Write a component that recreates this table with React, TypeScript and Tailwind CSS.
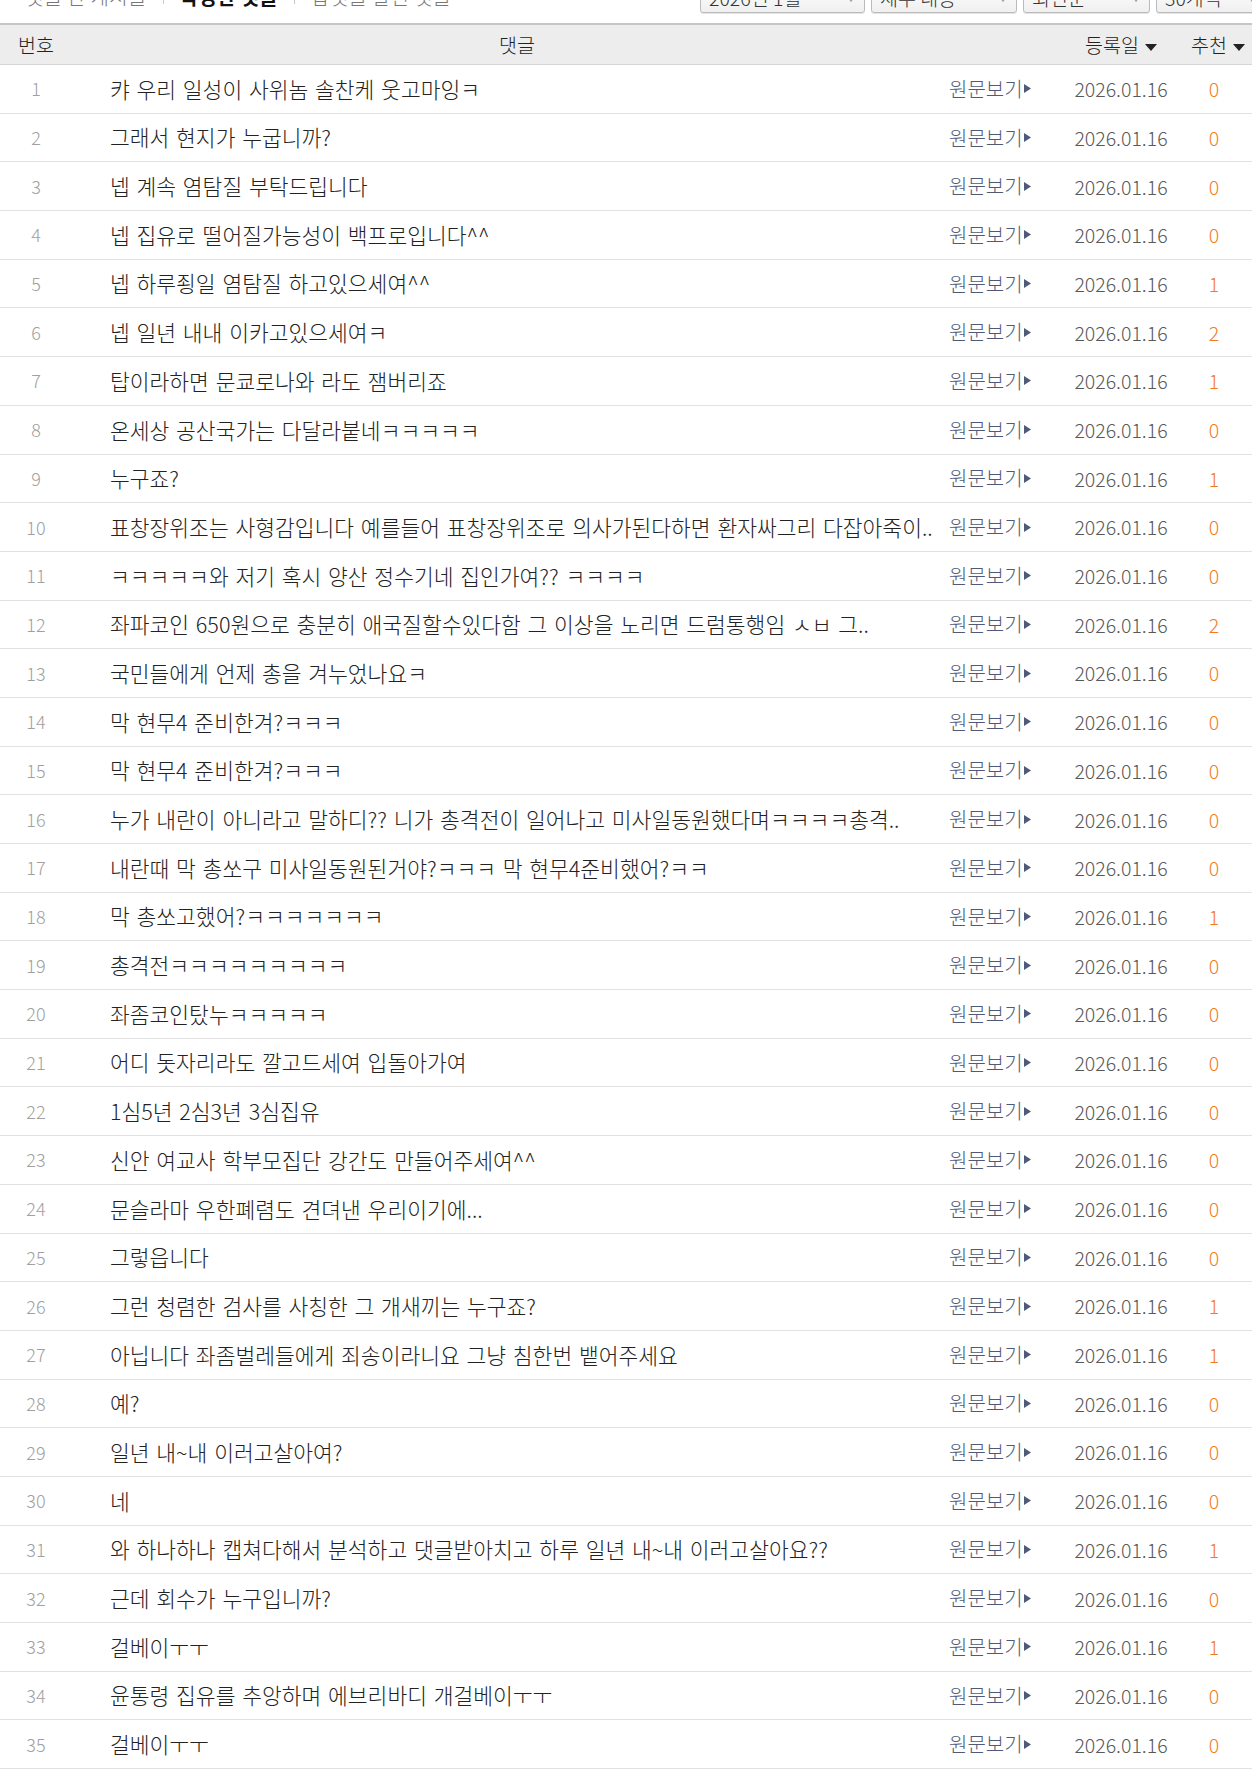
import React from "react";

type Row = { no: number; text: string; rec: number };

const rows: Row[] = [
  { no: 1, text: "캬 우리 일성이 사위놈 솔찬케 웃고마잉ㅋ", rec: 0 },
  { no: 2, text: "그래서 현지가 누굽니까?", rec: 0 },
  { no: 3, text: "넵 계속 염탐질 부탁드립니다", rec: 0 },
  { no: 4, text: "넵 집유로 떨어질가능성이 백프로입니다^^", rec: 0 },
  { no: 5, text: "넵 하루죙일 염탐질 하고있으세여^^", rec: 1 },
  { no: 6, text: "넵 일년 내내 이카고있으세여ㅋ", rec: 2 },
  { no: 7, text: "탑이라하면 문쿄로나와 라도 잼버리죠", rec: 1 },
  { no: 8, text: "온세상 공산국가는 다달라붙네ㅋㅋㅋㅋㅋ", rec: 0 },
  { no: 9, text: "누구죠?", rec: 1 },
  { no: 10, text: "표창장위조는 사형감입니다 예를들어 표창장위조로 의사가된다하면 환자싸그리 다잡아죽이..", rec: 0 },
  { no: 11, text: "ㅋㅋㅋㅋㅋ와 저기 혹시 양산 정수기네 집인가여?? ㅋㅋㅋㅋ", rec: 0 },
  { no: 12, text: "좌파코인 650원으로 충분히 애국질할수있다함 그 이상을 노리면 드럼통행임 ㅅㅂ 그..", rec: 2 },
  { no: 13, text: "국민들에게 언제 총을 겨누었나요ㅋ", rec: 0 },
  { no: 14, text: "막 현무4 준비한겨?ㅋㅋㅋ", rec: 0 },
  { no: 15, text: "막 현무4 준비한겨?ㅋㅋㅋ", rec: 0 },
  { no: 16, text: "누가 내란이 아니라고 말하디?? 니가 총격전이 일어나고 미사일동원했다며ㅋㅋㅋㅋ총격..", rec: 0 },
  { no: 17, text: "내란때 막 총쏘구 미사일동원된거야?ㅋㅋㅋ 막 현무4준비했어?ㅋㅋ", rec: 0 },
  { no: 18, text: "막 총쏘고했어?ㅋㅋㅋㅋㅋㅋㅋ", rec: 1 },
  { no: 19, text: "총격전ㅋㅋㅋㅋㅋㅋㅋㅋㅋ", rec: 0 },
  { no: 20, text: "좌좀코인탔누ㅋㅋㅋㅋㅋ", rec: 0 },
  { no: 21, text: "어디 돗자리라도 깔고드세여 입돌아가여", rec: 0 },
  { no: 22, text: "1심5년 2심3년 3심집유", rec: 0 },
  { no: 23, text: "신안 여교사 학부모집단 강간도 만들어주세여^^", rec: 0 },
  { no: 24, text: "문슬라마 우한폐렴도 견뎌낸 우리이기에...", rec: 0 },
  { no: 25, text: "그렇읍니다", rec: 0 },
  { no: 26, text: "그런 청렴한 검사를 사칭한 그 개새끼는 누구죠?", rec: 1 },
  { no: 27, text: "아닙니다 좌좀벌레들에게 죄송이라니요 그냥 침한번 뱉어주세요", rec: 1 },
  { no: 28, text: "예?", rec: 0 },
  { no: 29, text: "일년 내~내 이러고살아여?", rec: 0 },
  { no: 30, text: "네", rec: 0 },
  { no: 31, text: "와 하나하나 캡쳐다해서 분석하고 댓글받아치고 하루 일년 내~내 이러고살아요??", rec: 1 },
  { no: 32, text: "근데 회수가 누구입니까?", rec: 0 },
  { no: 33, text: "걸베이ㅜㅜ", rec: 1 },
  { no: 34, text: "윤통령 집유를 추앙하며 에브리바디 개걸베이ㅜㅜ", rec: 0 },
  { no: 35, text: "걸베이ㅜㅜ", rec: 0 },
];

const selects = [
  { label: "2026년 1월", w: "w-[165px]" },
  { label: "세부 내용", w: "w-[146px]" },
  { label: "최신순", w: "w-[127px]" },
  { label: "30개씩", w: "w-[110px]" },
];

function Caret() {
  return (
    <svg width="12" height="7" viewBox="0 0 12 7" className="inline-block ml-[6px]">
      <path d="M0 0h12L6 7z" fill="#222" />
    </svg>
  );
}

function TopBar() {
  return (
    <div className="h-[23px] overflow-hidden flex justify-between">
      <div className="flex items-center -mt-[17px] pl-[25px] text-[20px] leading-[28px] h-[28px] tracking-[0.3px]">
        <span className="text-[#777] font-light">댓글 단 게시글</span>
        <span className="mx-[16px] w-px h-[14px] bg-[#ccc]" />
        <span className="text-[#111] font-bold">작성한 댓글</span>
        <span className="mx-[16px] w-px h-[14px] bg-[#ccc]" />
        <span className="text-[#777] font-light">답댓글 달린 댓글</span>
      </div>
      <div className="flex gap-[6px] -mt-[18px] -mr-[14px]">
        {selects.map((s) => (
          <div
            key={s.label}
            className={`${s.w} h-[31px] border border-[#bbb] rounded-[3px] bg-gradient-to-b from-white to-[#f0f0f0] flex items-center justify-between px-[8px] text-[19.5px] font-light text-[#333] shadow-[0_1px_0_#e4e4e4]`}
          >
            <span>{s.label}</span>
            <span className="text-[10px] text-[#999]">▼</span>
          </div>
        ))}
      </div>
    </div>
  );
}

export default function App() {
  return (
    <div
      className="w-[1252px] bg-white text-[#222] font-light"
      style={{ fontFamily: '"Noto Sans CJK KR", "Noto Sans", sans-serif' }}
    >
      <TopBar />
      {/* header */}
      <div className="flex h-[42px] items-center bg-[#ededed] border-t-2 border-[#c6c6c6] border-b border-b-[#d6d6d6] text-[19.5px] text-[#222]">
        <div className="w-[72px] text-center">번호</div>
        <div className="flex-1 text-center pl-[14px]">댓글</div>
        <div className="w-[110px]" />
        <div className="w-[126px] text-center">
          등록일
          <Caret />
        </div>
        <div className="w-[68px] text-center">
          추천
          <Caret />
        </div>
      </div>
      {/* rows */}
      <div>
        {rows.map((r) => (
          <div
            key={r.no}
            className="flex h-[48.7px] items-center border-b border-[#e2e2e2] text-[19.5px]"
          >
            <div className="w-[72px] text-center text-[#a0a0a0] text-[18px]">{r.no}</div>
            <div className="flex-1 pl-[38px] whitespace-nowrap overflow-hidden text-[#222] text-[21.5px] [word-spacing:2px]">
              {r.text}
            </div>
            <div className="w-[110px] pl-[1px] flex items-center text-[#4f5a78] text-[20px]">
              원문보기
              <svg width="7" height="9" viewBox="0 0 7 9" className="ml-[1px]">
                <path d="M0 0L7 4.5L0 9z" fill="#4f5a78" />
              </svg>
            </div>
            <div className="w-[126px] text-center text-[#585858]">2026.01.16</div>
            <div className="w-[68px] text-center pr-[8px] text-[#f47a1f]">{r.rec}</div>
          </div>
        ))}
      </div>
    </div>
  );
}
